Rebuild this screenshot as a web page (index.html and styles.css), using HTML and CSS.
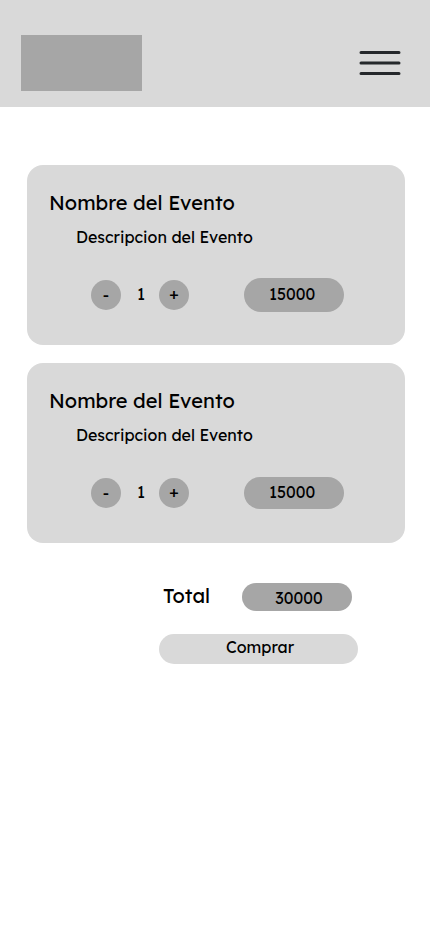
FILE: index.html
```html
<!DOCTYPE html>
<html lang="es">
<head>
<meta charset="utf-8">
<meta name="viewport" content="width=device-width, initial-scale=1">
<title>Carrito</title>
<link rel="stylesheet" href="styles.css">
</head>
<body>
<header class="header">
  <div class="logo"></div>
  <button class="menu" type="button" aria-label="Menú">
    <svg width="42" height="26" viewBox="0 0 42 26" fill="none" stroke="#25282b" stroke-width="3" stroke-linecap="round" aria-hidden="true">
      <path d="M2 2.500H40M2 13H40M2 23.500H40"/>
    </svg>
  </button>
</header>
<main class="cart">
  <article class="card">
    <h2 class="title">Nombre del Evento</h2>
    <p class="description">Descripcion del Evento</p>
    <div class="controls">
      <div class="stepper">
        <button class="step" type="button">-</button>
        <span class="quantity">1</span>
        <button class="step step-plus" type="button">+</button>
      </div>
      <span class="pill price">15000</span>
    </div>
  </article>
  <article class="card">
    <h2 class="title">Nombre del Evento</h2>
    <p class="description">Descripcion del Evento</p>
    <div class="controls">
      <div class="stepper">
        <button class="step" type="button">-</button>
        <span class="quantity">1</span>
        <button class="step step-plus" type="button">+</button>
      </div>
      <span class="pill price price-compact">15000</span>
    </div>
  </article>
  <section class="summary">
    <div class="total">
      <span class="total-label">Total</span>
      <span class="pill amount">30000</span>
    </div>
    <button class="buy" type="button">Comprar</button>
  </section>
</main>
</body>
</html>
```
FILE: styles.css
```css
* {
  box-sizing: border-box;
}

body {
  margin: 0;
  background: #fff;
  color: #000;
  font-family: Lexend, "Lexend Deca", Inter, sans-serif;
  font-size: 16px;
  line-height: 20px;
}

button {
  border: 0;
  padding: 0;
  color: inherit;
  font: inherit;
  cursor: pointer;
}

.header {
  display: flex;
  justify-content: space-between;
  align-items: center;
  padding: 35px 29px 16px 21px;
  background: #d9d9d9;
}

.logo {
  width: 121px;
  height: 56px;
  background: #a6a6a6;
}

.menu {
  display: flex;
  background: none;
}

.cart {
  display: flex;
  flex-direction: column;
  gap: 18px;
  padding: 58px 25px 24px 27px;
}

.card {
  padding: 24px 61px 33px 22px;
  border-radius: 16px;
  background: #d9d9d9;
}

.title,
.total-label {
  margin: 0;
  font-size: 20px;
  font-weight: 400;
  line-height: 28px;
}

.description {
  margin: 10px 0 0 27px;
}

.controls {
  display: flex;
  justify-content: space-between;
  align-items: center;
  height: 34px;
  margin: 31px 0 0 42px;
}

.stepper {
  display: flex;
  justify-content: space-between;
  align-items: center;
  width: 98px;
}

.step {
  width: 30px;
  height: 30px;
  border-radius: 50%;
  background: #a6a6a6;
}

.step-plus {
  padding-bottom: 2px;
}

.quantity {
  padding: 0 0 2px 2px;
}

.pill {
  display: flex;
  justify-content: center;
  align-items: center;
  border-radius: 17px;
  background: #a6a6a6;
}

.price {
  width: 100px;
  height: 34px;
  padding: 0 4px 2px 0;
}

.price-compact {
  height: 32px;
}

.summary {
  display: flex;
  flex-direction: column;
  align-items: flex-end;
  gap: 23px;
  padding: 22px 47px 0 0;
}

.total {
  display: flex;
  justify-content: space-between;
  align-items: center;
  width: 189px;
  margin-right: 6px;
}

.total-label {
  padding-bottom: 2px;
  line-height: 26px;
}

.amount {
  width: 110px;
  height: 28px;
  padding: 2px 0 0 4px;
}

.buy {
  width: 199px;
  height: 30px;
  padding: 0 0 4px 3px;
  border-radius: 15px;
  background: #d9d9d9;
}
```
